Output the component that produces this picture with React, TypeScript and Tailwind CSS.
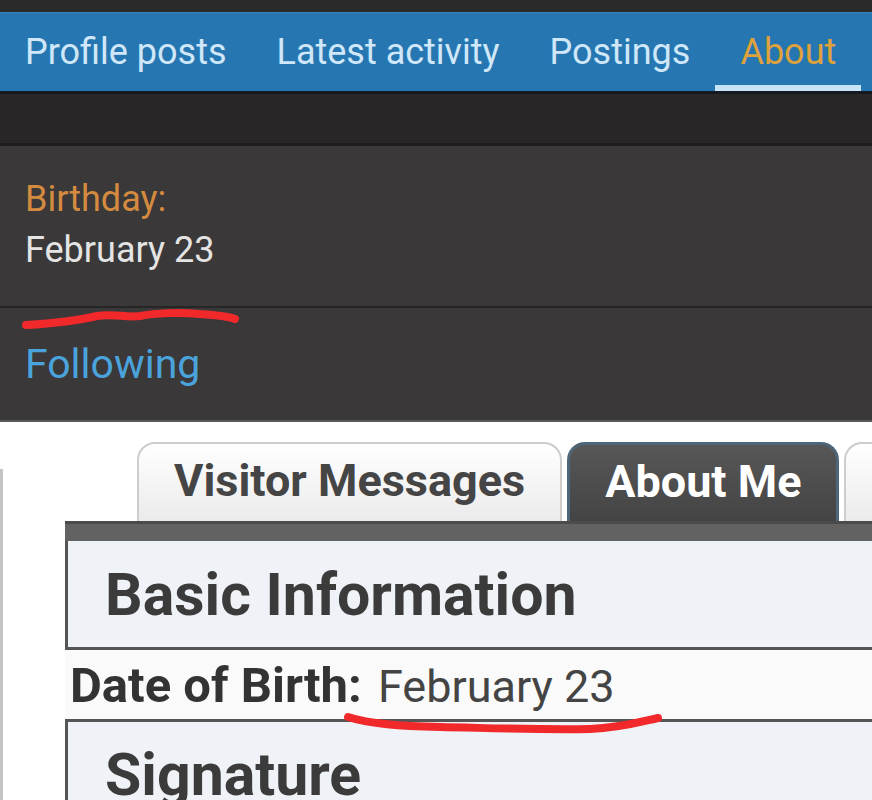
import React from "react";

// ─── Top: dark forum profile (nav + about panel) ──────────────────────────────

const NAV = ["Profile posts", "Latest activity", "Postings", "About"];

function DarkProfile() {
  return (
    <div className="bg-[#2a2a2a] pt-[12px]">
      <nav className="flex h-[79px] border-t border-[#3a83ba] bg-[#2677b1]">
        {NAV.map((label) => {
          const active = label === "About";
          return (
            <div key={label} className="relative flex items-center px-[25px]">
              <span
                className={`text-[36px] leading-none ${
                  active ? "text-[#dea23c]" : "text-[#cfe7f8]"
                }`}
              >
                {label}
              </span>
              {active && (
                <div className="absolute bottom-0 left-0 right-0 h-[6px] bg-[#c6e3f7]" />
              )}
            </div>
          );
        })}
      </nav>
      <div className="h-[3px] bg-[#141a20]" />
      <div className="h-[49px] bg-[#282627]" />
      <div className="h-[3px] bg-[#1d1d1d]" />

      {/* Birthday */}
      <div className="bg-[#3a3839] px-[25px] pt-[32px] pb-[35px]">
        <div className="text-[36px] leading-[42px] text-[#d48b3f]">Birthday:</div>
        <div className="mt-[9px] text-[36px] leading-[42px] text-[#e4e4e4]">February 23</div>
      </div>
      <div className="h-[2px] bg-[#262626]" />

      {/* Following */}
      <div className="h-[112px] overflow-hidden bg-[#3a3839] px-[25px] pt-[33px]">
        <div className="text-[41px] leading-[47px] text-[#4ba3dc]">Following</div>
      </div>
      <div className="h-[2px] bg-[#5a5a5a]" />
    </div>
  );
}

// ─── Bottom: light profile with tabs ──────────────────────────────────────────

function LightProfile() {
  return (
    <div className="flex bg-white pt-[20px]">
      <div className="mt-[27px] w-[3px] bg-[#c4c4c4]" />
      <div className="ml-[62px] flex flex-1 flex-col">
        {/* Tabs */}
        <div className="flex h-[79px] gap-[5px] pl-[72px]">
          <div className="flex items-center rounded-t-[18px] border-2 border-b-0 border-[#cdcdcd] bg-gradient-to-b from-white to-[#ebebeb] px-[35px] pb-[4px]">
            <span className="text-[45px] leading-none font-bold text-[#454545]">Visitor Messages</span>
          </div>
          <div className="flex items-center rounded-t-[18px] border-[3px] border-b-0 border-[#4e6679] bg-gradient-to-b from-[#575757] to-[#444444] px-[35px] pb-[4px]">
            <span className="text-[45px] leading-none font-bold text-white">About Me</span>
          </div>
          <div className="flex-1 rounded-tl-[18px] border-2 border-r-0 border-b-0 border-[#cdcdcd] bg-gradient-to-b from-white to-[#ebebeb]" />
        </div>
        <div className="h-[20px] border-t-[3px] border-[#4b4b4b] bg-[#626262]" />

        {/* Basic Information */}
        <div className="border-b-[3px] border-l-[3px] border-[#555555] bg-[#eff3f7] pt-[19px] pb-[18px] pl-[37px]">
          <div className="text-[59px] leading-[69px] font-bold text-[#3b3b3b]">Basic Information</div>
        </div>

        {/* Date of birth */}
        <div className="flex items-baseline bg-[#fafafa] pt-[7px] pb-[4px] pl-[5px]">
          <span className="text-[49px] leading-[57px] font-bold text-[#333333]">Date of Birth:</span>
          <span className="ml-[16px] text-[45px] leading-[57px] text-[#444444]">February 23</span>
        </div>

        {/* Signature */}
        <div className="h-[90px] border-t-[3px] border-l-[3px] border-[#555555] bg-[#eff3f7] pt-[18px] pl-[37px]">
          <div className="text-[59px] leading-[69px] font-bold text-[#3b3b3b]">Signature</div>
        </div>
      </div>
    </div>
  );
}

export default function App() {
  return (
    <div className="relative h-[800px] w-[872px] overflow-hidden bg-white font-[Roboto,'Liberation_Sans',sans-serif]">
      <DarkProfile />
      <LightProfile />

      {/* hand-drawn red underlines */}
      <svg
        className="pointer-events-none absolute inset-0"
        width="872"
        height="800"
        viewBox="0 0 872 800"
        fill="none"
      >
        <path
          d="M26 325 C 60 323, 80 320, 97 316 C 115 313, 125 318, 140 316 C 155 313, 180 312, 200 314 C 215 315, 228 316, 235 319"
          stroke="#f2292b"
          strokeWidth="8"
          strokeLinecap="round"
          strokeLinejoin="round"
        />
        <path
          d="M348 717 C 370 724, 400 726, 440 727 C 490 728, 540 730, 590 729 C 620 728, 640 722, 658 718"
          stroke="#f2292b"
          strokeWidth="8"
          strokeLinecap="round"
          strokeLinejoin="round"
        />
      </svg>
    </div>
  );
}
